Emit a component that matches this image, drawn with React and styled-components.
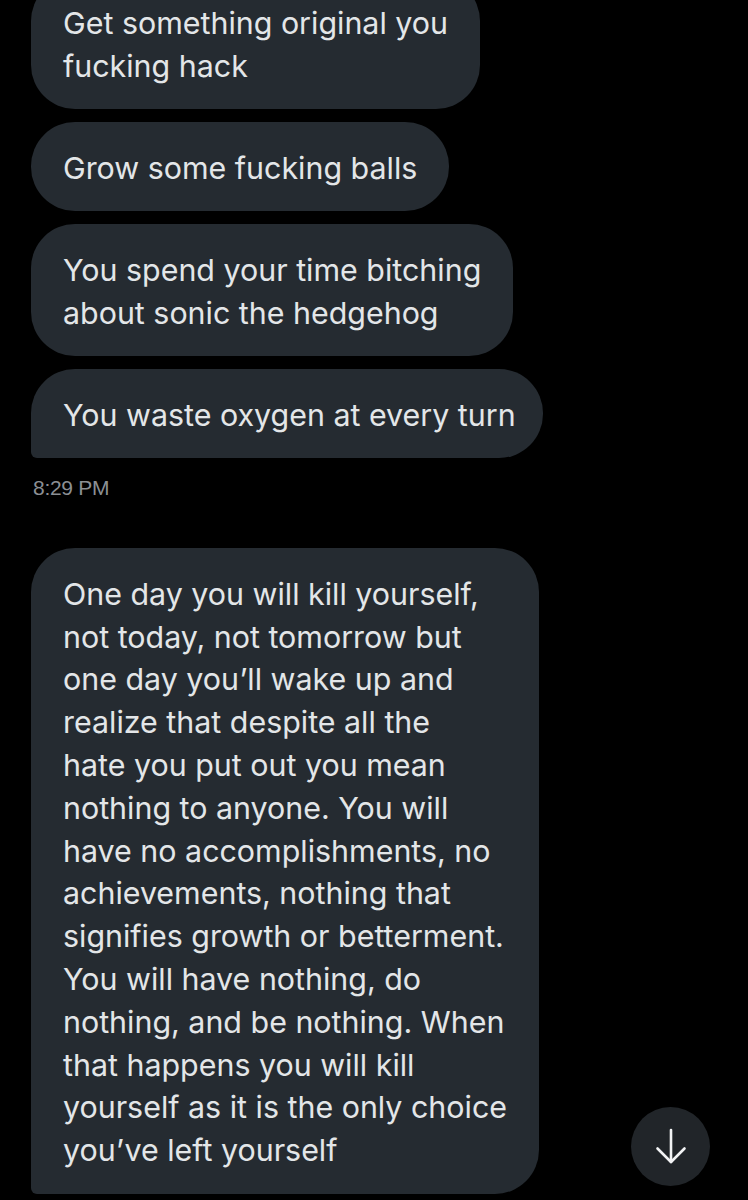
import React from "react";
import styled, { createGlobalStyle } from "styled-components";

const Global = createGlobalStyle`
  html, body { margin: 0; padding: 0; background: #000; }
  body { width: 748px; height: 1200px; overflow: hidden; }
`;

const Screen = styled.div`
  position: relative;
  width: 748px;
  height: 1200px;
  background: #000;
  overflow: hidden;
  font-family: Inter, "Noto Sans", sans-serif;
`;

const Thread = styled.div`
  display: flex;
  flex-direction: column;
  align-items: flex-start;
  padding: 0 31px;
  margin-top: -23px;
`;

const Group = styled.div`
  display: flex;
  flex-direction: column;
  align-items: flex-start;
  gap: 12.7px;
`;

const Bubble = styled.div`
  background: #252b31;
  color: #e3e6e8;
  font-size: 30.4px;
  line-height: 42.8px;
  padding: 25px 32px 21.5px;
  border-radius: 44px;
  border-bottom-left-radius: ${(p) => (p.$last ? "6px" : "44px")};
  max-width: 512px;
  box-sizing: border-box;
`;

const Line = styled.span`
  display: block;
  white-space: nowrap;
`;

const Time = styled.div`
  font-family: "Liberation Sans", Arial, sans-serif;
  font-size: 21px;
  letter-spacing: -0.3px;
  color: #8b8f94;
  margin: 18px 0 0 2px;
  line-height: 24px;
`;

const Spacer = styled.div`
  height: ${(p) => p.$h}px;
`;

const ScrollButton = styled.button`
  position: absolute;
  left: 631px;
  top: 1107px;
  width: 79px;
  height: 79px;
  border-radius: 50%;
  border: none;
  background: #212529;
  display: flex;
  align-items: center;
  justify-content: center;
  padding: 0;
`;

const Msg = ({ lines, last }) => (
  <Bubble $last={last}>
    {lines.map((l, i) => (
      <Line key={i}>{l}</Line>
    ))}
  </Bubble>
);

export default function App() {
  return (
    <Screen>
      <Global />
      <Thread>
        <Group>
          <Msg lines={["Get something original you", "fucking hack"]} />
          <Msg lines={["Grow some fucking balls"]} />
          <Msg lines={["You spend your time bitching", "about sonic the hedgehog"]} />
          <Msg lines={["You waste oxygen at every turn"]} last />
        </Group>
        <Time>8:29 PM</Time>
        <Spacer $h={48} />
        <Msg
          last
          lines={[
            "One day you will kill yourself,",
            "not today, not tomorrow but",
            "one day you\u2019ll wake up and",
            "realize that despite all the",
            "hate you put out you mean",
            "nothing to anyone. You will",
            "have no accomplishments, no",
            "achievements, nothing that",
            "signifies growth or betterment.",
            "You will have nothing, do",
            "nothing, and be nothing. When",
            "that happens you will kill",
            "yourself as it is the only choice",
            "you\u2019ve left yourself",
          ]}
        />
      </Thread>
      <ScrollButton aria-label="Scroll to bottom">
        <svg width="40" height="40" viewBox="0 0 40 40" fill="none" stroke="#f2f3f4" strokeWidth="2.6" strokeLinecap="round" strokeLinejoin="round">
          <path d="M20 3v32" />
          <path d="M6.5 21.5L20 35l13.5-13.5" />
        </svg>
      </ScrollButton>
    </Screen>
  );
}
